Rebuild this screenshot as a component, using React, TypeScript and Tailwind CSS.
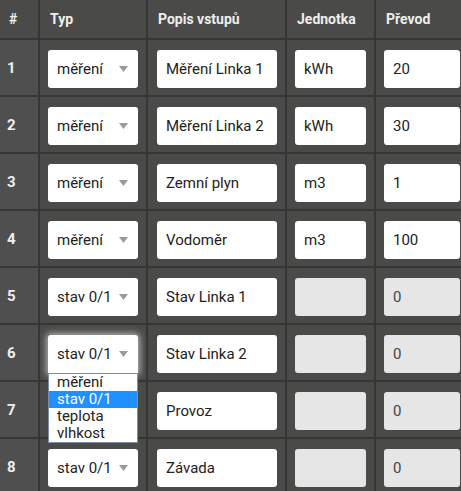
import React from "react";

type Row = {
  id: number;
  typ: string;
  popis: string;
  jednotka: string;
  prevod: string;
  disabled: boolean;
};

const rows: Row[] = [
  { id: 1, typ: "měření", popis: "Měření Linka 1", jednotka: "kWh", prevod: "20", disabled: false },
  { id: 2, typ: "měření", popis: "Měření Linka 2", jednotka: "kWh", prevod: "30", disabled: false },
  { id: 3, typ: "měření", popis: "Zemní plyn", jednotka: "m3", prevod: "1", disabled: false },
  { id: 4, typ: "měření", popis: "Vodoměr", jednotka: "m3", prevod: "100", disabled: false },
  { id: 5, typ: "stav 0/1", popis: "Stav Linka 1", jednotka: "", prevod: "0", disabled: true },
  { id: 6, typ: "stav 0/1", popis: "Stav Linka 2", jednotka: "", prevod: "0", disabled: true },
  { id: 7, typ: "stav 0/1", popis: "Provoz", jednotka: "", prevod: "0", disabled: true },
  { id: 8, typ: "stav 0/1", popis: "Závada", jednotka: "", prevod: "0", disabled: true },
];

const options = ["měření", "stav 0/1", "teplota", "vlhkost"];

const Select = ({ value, open, hidden }: { value: string; open?: boolean; hidden?: boolean }) => (
  <div className={"relative " + (hidden ? "invisible" : "")}>
    <div
      className={
        "flex h-[38px] w-full items-center justify-between rounded-[3px] bg-white pl-[9px] pr-[9px] text-[15px] text-[#222] " +
        (open ? "rounded-b-none shadow-[0_0_6px_2px_rgba(255,255,255,0.55)]" : "")
      }
    >
      <span>{value}</span>
      <svg width="9" height="6" viewBox="0 0 9 6" className="mr-[1px]">
        <path d="M0 0 H9 L4.5 6 Z" fill="#9a9a9a" />
      </svg>
    </div>
    {open && (
      <div className="visible absolute left-0 top-[38px] z-10 w-full border border-[#7d8da3] bg-white">
        {options.map((o) => (
          <div
            key={o}
            className={
              "h-[17px] pl-[8px] text-[15px] leading-[17px] " +
              (o === value ? "bg-[#1e90ff] text-white" : "text-[#222]")
            }
          >
            {o}
          </div>
        ))}
      </div>
    )}
  </div>
);

const Field = ({ value, disabled }: { value: string; disabled?: boolean }) => (
  <div
    className={
      "flex h-[38px] w-full items-center rounded-[3px] pl-[9px] text-[15px] " +
      (disabled ? "bg-[#e6e6e6] text-[#444]" : "bg-white text-[#222]")
    }
  >
    {value}
  </div>
);

const App = () => {
  return (
    <div
      className="h-[491px] w-[461px] overflow-hidden bg-[#363636]"
      style={{ fontFamily: "Roboto, 'Liberation Sans', sans-serif" }}
    >
      <div className="grid w-[470px] grid-cols-[38px_106px_137px_87px_100px] gap-[2px]">
        {/* Header */}
        <div className="flex h-[38px] items-center pl-[9px] text-[14px] font-bold text-[#eee] bg-[#4a4a48]">#</div>
        <div className="flex h-[38px] items-center pl-[10px] text-[14px] font-bold text-[#eee] bg-[#4a4a48]">Typ</div>
        <div className="flex h-[38px] items-center pl-[10px] text-[14px] font-bold text-[#eee] bg-[#4a4a48]">Popis vstupů</div>
        <div className="flex h-[38px] items-center pl-[10px] text-[14px] font-bold text-[#eee] bg-[#4a4a48]">Jednotka</div>
        <div className="flex h-[38px] items-center pl-[10px] text-[14px] font-bold text-[#eee] bg-[#4a4a48]">Převod</div>

        {rows.map((r) => (
          <React.Fragment key={r.id}>
            <div className="flex h-[55px] items-center pl-[7px] pt-[2px] text-[15px] font-bold text-[#eee] bg-[#4f4f4f]">
              {r.id}
            </div>
            <div className="h-[55px] bg-[#4a4a48] px-[8px] pt-[10px]">
              {/* row 7's select sits under the open list of row 6 */}
              <Select value={r.typ} open={r.id === 6} hidden={r.id === 7} />
            </div>
            <div className="h-[55px] bg-[#4a4a48] pl-[9px] pr-[8px] pt-[10px]">
              <Field value={r.popis} />
            </div>
            <div className="h-[55px] bg-[#4a4a48] px-[8px] pt-[10px]">
              <Field value={r.jednotka} disabled={r.disabled} />
            </div>
            <div className="h-[55px] bg-[#4a4a48] pl-[8px] pr-[16px] pt-[10px]">
              <Field value={r.prevod} disabled={r.disabled} />
            </div>
          </React.Fragment>
        ))}
      </div>
    </div>
  );
};

export default App;
